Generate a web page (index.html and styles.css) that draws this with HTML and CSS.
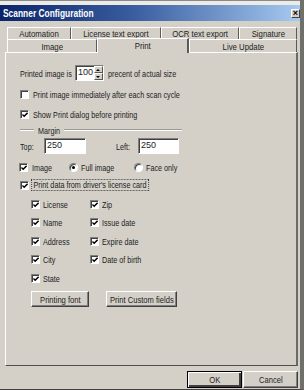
FILE: index.html
```html
<!DOCTYPE html>
<html lang="en">
<head>
    <meta charset="UTF-8">
    <title>Scanner Configuration</title>
    <link rel="stylesheet" href="styles.css">
</head>
<body>
    <div class="window">
        <div class="topstrip"></div>
        <div class="titlebar">
            <span class="title">Scanner Configuration</span>
            <span class="close">×</span>
        </div>

        <div class="content">
            <div class="tabs">
                <div class="tabrow back">
                    <div class="tab t-auto"><span class="tx">Automation</span></div>
                    <div class="tab t-lic"><span class="tx">License text export</span></div>
                    <div class="tab t-ocr"><span class="tx">OCR text export</span></div>
                    <div class="tab t-sig"><span class="tx">Signature</span></div>
                </div>
                <div class="tabrow front">
                    <div class="tab t-img"><span class="tx">Image</span></div>
                    <div class="tab t-print active"><span class="tx">Print</span></div>
                    <div class="tab t-live"><span class="tx">Live Update</span></div>
                </div>
            </div>

            <div class="panel">
                <div class="row r-spin">
                    <span class="tx lbl-printed">Printed image is</span>
                    <div class="spin">
                        <span class="spin-val">100</span>
                        <span class="spin-btns"><i class="up"></i><i class="down"></i></span>
                    </div>
                    <span class="tx">precent of actual size</span>
                </div>

                <div class="row r-gap7">
                    <span class="chk"></span>
                    <span class="tx">Print image immediately after each scan cycle</span>
                </div>

                <div class="row r-gap8">
                    <span class="chk on"><svg viewBox="0 0 7 7"><polyline points="0.5,3 2.5,5 6.5,1"/></svg></span>
                    <span class="tx">Show Print dialog before printing</span>
                </div>

                <div class="row r-group">
                    <span class="etch short"></span>
                    <span class="tx group-label">Margin</span>
                    <span class="etch long"></span>
                </div>

                <div class="row r-margin">
                    <span class="tx lbl-top">Top:</span>
                    <span class="field f-top">250</span>
                    <span class="tx lbl-left">Left:</span>
                    <span class="field f-left">250</span>
                </div>

                <div class="row r-image">
                    <div class="opt o-image">
                        <span class="chk on"><svg viewBox="0 0 7 7"><polyline points="0.5,3 2.5,5 6.5,1"/></svg></span>
                        <span class="tx">Image</span>
                    </div>
                    <div class="opt o-full">
                        <span class="radio on"></span>
                        <span class="tx">Full image</span>
                    </div>
                    <div class="opt">
                        <span class="radio"></span>
                        <span class="tx">Face only</span>
                    </div>
                </div>

                <div class="row r-data">
                    <span class="chk on"><svg viewBox="0 0 7 7"><polyline points="0.5,3 2.5,5 6.5,1"/></svg></span>
                    <span class="tx focus">Print data from driver's license card</span>
                </div>

                <div class="fields">
                    <div class="opt"><span class="chk on"><svg viewBox="0 0 7 7"><polyline points="0.5,3 2.5,5 6.5,1"/></svg></span><span class="tx">License</span></div>
                    <div class="opt"><span class="chk on"><svg viewBox="0 0 7 7"><polyline points="0.5,3 2.5,5 6.5,1"/></svg></span><span class="tx">Zip</span></div>
                    <div class="opt"><span class="chk on"><svg viewBox="0 0 7 7"><polyline points="0.5,3 2.5,5 6.5,1"/></svg></span><span class="tx">Name</span></div>
                    <div class="opt"><span class="chk on"><svg viewBox="0 0 7 7"><polyline points="0.5,3 2.5,5 6.5,1"/></svg></span><span class="tx">Issue date</span></div>
                    <div class="opt"><span class="chk on"><svg viewBox="0 0 7 7"><polyline points="0.5,3 2.5,5 6.5,1"/></svg></span><span class="tx">Address</span></div>
                    <div class="opt"><span class="chk on"><svg viewBox="0 0 7 7"><polyline points="0.5,3 2.5,5 6.5,1"/></svg></span><span class="tx">Expire date</span></div>
                    <div class="opt"><span class="chk on"><svg viewBox="0 0 7 7"><polyline points="0.5,3 2.5,5 6.5,1"/></svg></span><span class="tx">City</span></div>
                    <div class="opt"><span class="chk on"><svg viewBox="0 0 7 7"><polyline points="0.5,3 2.5,5 6.5,1"/></svg></span><span class="tx">Date of birth</span></div>
                    <div class="opt"><span class="chk on"><svg viewBox="0 0 7 7"><polyline points="0.5,3 2.5,5 6.5,1"/></svg></span><span class="tx">State</span></div>
                </div>

                <div class="row r-buttons">
                    <button class="btn b-font"><span class="tx">Printing font</span></button>
                    <button class="btn b-custom"><span class="tx">Print Custom fields</span></button>
                </div>
            </div>

            <div class="footer">
                <button class="btn b-ok"><span class="tx">OK</span></button>
                <button class="btn b-cancel"><span class="tx">Cancel</span></button>
            </div>
        </div>
    </div>
</body>
</html>
```

FILE: styles.css
```css
* {
    box-sizing: border-box;
}
html, body {
    margin: 0;
    padding: 0;
}
body {
    width: 304px;
    height: 390px;
    overflow: hidden;
    background: #d4d0c8;
    font-family: "Liberation Sans", Arial, sans-serif;
    font-size: 9.5px;
    color: #222;
}
/* the dialog text is narrow (shrunk screenshot), squeeze glyphs sideways */
.tx {
    display: inline-block;
    white-space: nowrap;
    transform: scaleX(0.76);
    transform-origin: left center;
}
.window {
    width: 304px;
    height: 390px;
    border-right: 4px solid #6f6f6c;
    border-bottom: 1px solid #404040;
    background: #d4d0c8;
}
.topstrip {
    height: 5px;
    background: #ecebe8;
    border-top: 1px solid #8a8a8a;
}
.titlebar {
    height: 16px;
    display: flex;
    align-items: center;
    justify-content: space-between;
    padding: 0 0 0 3px;
    background: linear-gradient(to right, #0a246a, #3a5ea0 45%, #a6caf0);
}
.title {
    color: #fff;
    font-weight: bold;
    font-size: 10px;
    display: inline-block;
    transform: scaleX(0.84);
    transform-origin: left center;
}
.close {
    width: 9px;
    height: 9px;
    background: #d4d0c8;
    border: 1px solid;
    border-color: #fff #404040 #404040 #fff;
    font-size: 9px;
    line-height: 6px;
    text-align: center;
    font-weight: bold;
    color: #000;
}
.content {
    padding: 6px 2px 0 5px;
}

/* tabs */
.tabs {
    margin-left: 2px;
}
.tabrow {
    display: flex;
}
.tabrow.back {
    height: 12px;
}
.tabrow.front {
    height: 13px;
}
.tab {
    display: flex;
    justify-content: center;
    line-height: 11px;
    border-top: 1px solid #fff;
    border-left: 1px solid #fff;
    border-right: 1px solid #5a5a5a;
}
.tab .tx {
    transform: scaleX(0.82);
    transform-origin: center;
}
.tabrow.front .tab {
    line-height: 14px;
}
.tab.active {
    margin-top: -1px;
    height: 15px;
    line-height: 12px;
    background: #d4d0c8;
    position: relative;
    z-index: 1;
    border-right-width: 2px;
}
.t-auto { width: 64px; }
.t-lic { width: 90px; }
.t-ocr { width: 78px; }
.t-sig { width: 58px; }
.t-img { width: 90px; }
.t-print { width: 92px; }
.t-live { width: 108px; }

/* panel */
.panel {
    height: 314px;
    border-top: 1px solid #fff;
    border-left: 1px solid #fff;
    border-right: 2px solid #6a6a6a;
    border-bottom: 1px solid #505050;
    padding: 12px 0 0 14px;
}
.row {
    display: flex;
    align-items: center;
    height: 12px;
}
.r-spin {
    height: 16px;
}
.lbl-printed {
    width: 52px;
}
.spin {
    display: flex;
    width: 29px;
    height: 16px;
    margin: 0 4px 0 3px;
    background: #fff;
    border: 1px solid;
    border-color: #808080 #fff #fff #808080;
    box-shadow: inset 1px 1px 0 #404040;
}
.spin-val {
    flex: 1;
    padding: 1px 0 0 2px;
    font-size: 9px;
}
.spin-btns {
    width: 9px;
    display: flex;
    flex-direction: column;
}
.spin-btns i {
    flex: 1;
    background: #d4d0c8;
    border: 1px solid;
    border-color: #fff #555 #555 #fff;
    position: relative;
}
.spin-btns i::after {
    content: "";
    position: absolute;
    left: 1px;
    top: 2px;
    border-left: 2px solid transparent;
    border-right: 2px solid transparent;
}
.spin-btns .up::after {
    border-bottom: 2px solid #000;
}
.spin-btns .down::after {
    border-top: 2px solid #000;
}
.r-gap7 { margin-top: 7px; }
.r-gap8 { margin-top: 8px; }

.chk {
    width: 9px;
    height: 9px;
    flex: none;
    margin-right: 4px;
    background: #fff;
    border: 1px solid;
    border-color: #808080 #fff #fff #808080;
    box-shadow: inset 1px 1px 0 #404040;
    display: flex;
    align-items: center;
    justify-content: center;
}
.chk svg {
    width: 6px;
    height: 6px;
    margin: 1px 0 0 1px;
}
.chk polyline {
    fill: none;
    stroke: #000;
    stroke-width: 1.6;
}
.radio {
    width: 9px;
    height: 9px;
    flex: none;
    margin-right: 3px;
    border-radius: 50%;
    background: #fff;
    border: 1px solid;
    border-color: #808080 #fff #fff #808080;
    box-shadow: inset 1px 1px 0 #404040;
    position: relative;
}
.radio.on::after {
    content: "";
    position: absolute;
    left: 2px;
    top: 2px;
    width: 3px;
    height: 3px;
    border-radius: 50%;
    background: #000;
}

/* margin group */
.r-group {
    margin-top: 4px;
}
.etch {
    height: 2px;
    border-top: 1px solid #9a9a96;
    border-bottom: 1px solid #fff;
}
.etch.short {
    width: 14px;
}
.group-label {
    width: 24px;
    margin-left: 4px;
}
.etch.long {
    width: 118px;
    margin-left: 2px;
}
.r-margin {
    margin-top: 2px;
    height: 16px;
}
.lbl-top {
    width: 24px;
}
.field {
    height: 16px;
    padding: 1px 0 0 2px;
    background: #fff;
    border: 1px solid;
    border-color: #808080 #fff #fff #808080;
    box-shadow: inset 1px 1px 0 #404040;
    font-size: 9px;
}
.f-top {
    width: 42px;
}
.lbl-left {
    width: 22px;
    margin-left: 30px;
}
.f-left {
    width: 41px;
}

.r-image {
    margin-top: 7px;
    margin-left: -1px;
}
.opt {
    display: flex;
    align-items: center;
    height: 12px;
}
.o-image { width: 50px; }
.o-full { width: 65px; }
.r-image .radio {
    margin-right: 3px;
}

.r-data {
    margin-top: 6px;
}
.r-data .chk {
    margin-right: 3px;
}
.focus {
    padding: 0 2px;
    line-height: 10px;
    outline: 1px dotted #333;
}

.fields {
    display: grid;
    grid-template-columns: 59px auto;
    grid-auto-rows: 12px;
    row-gap: 6.5px;
    margin: 7px 0 0 11px;
}
.fields .chk {
    margin-right: 3px;
}

.r-buttons {
    margin-top: 7px;
    height: 16px;
    padding-left: 11px;
    gap: 17px;
}
.btn {
    height: 16px;
    padding: 0;
    display: flex;
    align-items: center;
    justify-content: center;
    font-family: inherit;
    font-size: 9.5px;
    color: #222;
    background: #d4d0c8;
    border: 1px solid;
    border-color: #fff #404040 #404040 #fff;
    box-shadow: inset -1px -1px 0 #808080;
}
.btn .tx {
    transform: scaleX(0.8);
    transform-origin: center;
}
.b-font { width: 58px; }
.b-custom { width: 71px; }

.footer {
    display: flex;
    justify-content: flex-end;
    gap: 1px;
    padding: 5px 0 0 0;
}
.b-ok,
.b-cancel {
    width: 55px;
    height: 17px;
}
.b-ok {
    border: 1px solid #000;
    box-shadow: inset 1px 1px 0 #fff, inset -2px -2px 0 #404040;
}
```
